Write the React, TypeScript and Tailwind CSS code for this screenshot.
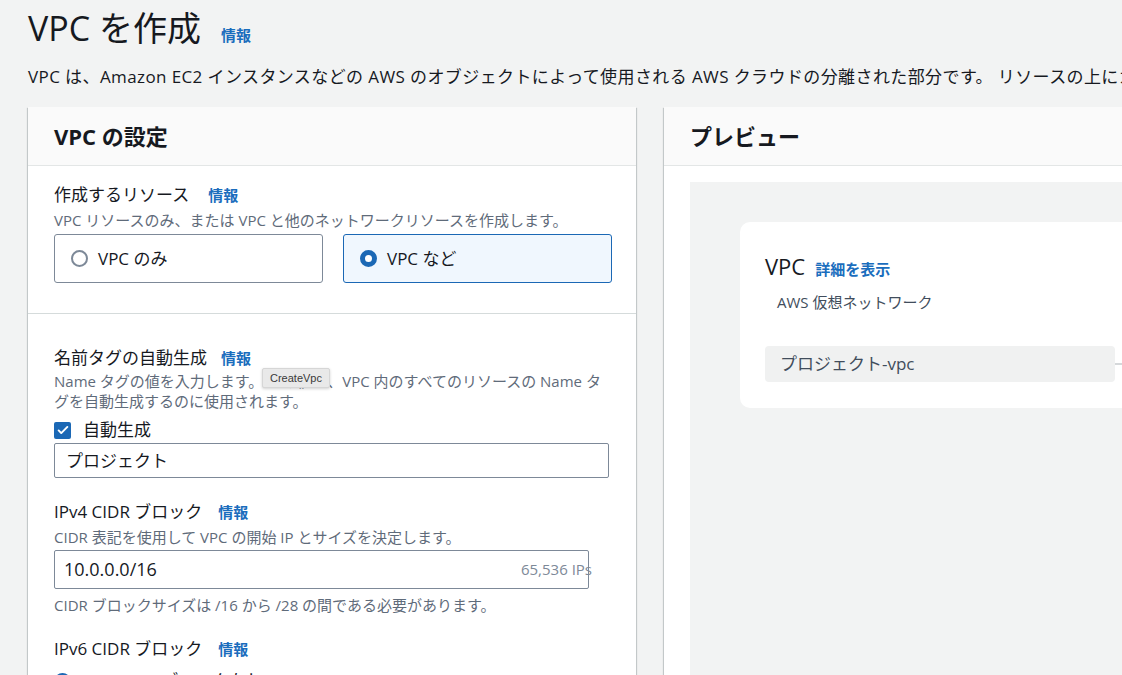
import React from 'react'

const font = "font-['Open_Sans','Noto_Sans_CJK_JP',sans-serif]"

function InfoLink({ className = '' }: { className?: string }) {
  return (
    <a className={`text-[15px] font-bold text-[#1a6dbd] ${className}`}>情報</a>
  )
}

function Radio({ checked }: { checked?: boolean }) {
  return checked ? (
    <span className="w-[17px] h-[17px] rounded-full border-[5px] border-[#1b68b5] bg-white shrink-0" />
  ) : (
    <span className="w-[17px] h-[17px] rounded-full border-2 border-[#7d8998] bg-white shrink-0" />
  )
}

function Tile({ label, checked }: { label: string; checked?: boolean }) {
  return (
    <div
      className={
        checked
          ? 'flex-1 h-[49px] flex items-center gap-[10px] px-[16px] rounded-[3px] border border-[#1b68b5] bg-[#f0f7fe]'
          : 'flex-1 h-[49px] flex items-center gap-[10px] px-[16px] rounded-[3px] border border-[#7d8998] bg-white'
      }
    >
      <Radio checked={checked} />
      <span className="text-[17px] leading-[22px] text-[#16191f]">{label}</span>
    </div>
  )
}

function PanelHeader({ title }: { title: string }) {
  return (
    <div className="h-[59px] shrink-0 bg-[#fafafa] border-b border-[#e3e6e6] px-[26px] flex items-center">
      <h2 className="text-[22px] font-bold text-[#16191f]">{title}</h2>
    </div>
  )
}

const panel =
  'w-[608px] shrink-0 bg-white flex flex-col shadow-[0_1px_1px_0_rgba(0,28,36,0.3),1px_1px_1px_0_rgba(0,28,36,0.15),-1px_1px_1px_0_rgba(0,28,36,0.15)]'

export default function App() {
  return (
    <div className={`${font} w-[1122px] h-[675px] overflow-hidden bg-[#f2f3f3] pl-[28px] pt-[8px] text-[#16191f]`}>
      <div className="flex items-baseline whitespace-nowrap">
        <h1 className="text-[34px] leading-[40px] font-normal">VPC を作成</h1>
        <InfoLink className="ml-[20px]" />
      </div>
      <p className="mt-[17px] text-[17px] leading-[24px] tracking-[0.4px] whitespace-nowrap">
        VPC は、Amazon EC2 インスタンスなどの AWS のオブジェクトによって使用される AWS クラウドの分離された部分です。 リソースの上にカーソルを置くと、詳細が表示されます。
      </p>

      <div className="mt-[18px] flex gap-[28px] h-[700px]">
        {/* settings */}
        <div className={panel}>
          <PanelHeader title="VPC の設定" />
          <div className="px-[26px] pt-[18px] pb-[30px] border-b border-[#d5dbdb]">
            <div className="flex items-center text-[17px] leading-[22px]">
              作成するリソース
              <InfoLink className="ml-[19px]" />
            </div>
            <p className="text-[15px] leading-[20px] text-[#5f6b7a] mt-[4px]">
              VPC リソースのみ、または VPC と他のネットワークリソースを作成します。
            </p>
            <div className="flex gap-[20px] mt-[4px] mr-[-2px]">
              <Tile label="VPC のみ" />
              <Tile label="VPC など" checked />
            </div>
          </div>

          <div className="px-[26px] pt-[33px]">
            <div className="flex items-center text-[17px] leading-[22px]">
              名前タグの自動生成
              <InfoLink className="ml-[14px]" />
            </div>
            <div className="relative mt-[2px] text-[15px] leading-[20px] text-[#5f6b7a] whitespace-nowrap">
              <p>Name タグの値を入力します。 この値は、VPC 内のすべてのリソースの Name タ</p>
              <p>グを自動生成するのに使用されます。</p>
              <span className="absolute left-[208px] top-[-3px] h-[20px] px-[7px] flex items-center bg-[#e9e9e9] border border-[#d6d6d6] rounded-[2px] shadow-[0_1px_3px_rgba(0,0,0,0.18)] text-[11px] text-[#3a3a3a] font-['Liberation_Sans',sans-serif]">
                CreateVpc
              </span>
            </div>
            <label className="mt-[8px] flex items-center gap-[12px] h-[22px]">
              <span className="w-[17px] h-[17px] rounded-[2px] bg-[#1b68b5] flex items-center justify-center">
                <svg viewBox="0 0 16 16" className="w-[14px] h-[14px]">
                  <path d="M3 8.5l3 3 7-7" fill="none" stroke="white" strokeWidth="2.2" strokeLinecap="round" strokeLinejoin="round" />
                </svg>
              </span>
              <span className="text-[17px] leading-[22px]">自動生成</span>
            </label>
            <div className="mt-[2px] h-[35px] w-[555px] border border-[#7d8998] rounded-[2px] flex items-center px-[11px] text-[17px]">
              プロジェクト
            </div>

            <div className="mt-[23px] flex items-center text-[17px] leading-[22px]">
              IPv4 CIDR ブロック
              <InfoLink className="ml-[16px]" />
            </div>
            <p className="mt-[4px] text-[15px] leading-[20px] text-[#5f6b7a]">
              CIDR 表記を使用して VPC の開始 IP とサイズを決定します。
            </p>
            <div className="relative mt-[3px] h-[39px] w-[535px] border border-[#7d8998] rounded-[2px] flex items-center px-[9px] text-[18px]">
              10.0.0.0/16
              <span className="absolute right-[-4px] text-[15px] text-[#7d8998]">65,536 IPs</span>
            </div>
            <p className="mt-[6px] text-[15px] leading-[20px] text-[#5f6b7a]">
              CIDR ブロックサイズは /16 から /28 の間である必要があります。
            </p>

            <div className="mt-[23px] flex items-center text-[17px] leading-[22px]">
              IPv6 CIDR ブロック
              <InfoLink className="ml-[16px]" />
            </div>
            <div className="mt-[10px] flex items-center gap-[10px] h-[22px]">
              <Radio checked />
              <span className="text-[17px]">IPv6 CIDR ブロックなし</span>
            </div>
          </div>
        </div>

        {/* preview */}
        <div className={panel}>
          <PanelHeader title="プレビュー" />
          <div className="flex-1 flex flex-col pl-[26px] pt-[16px]">
            <div className="flex-1 bg-[#f2f3f3] pl-[50px] pt-[40px]">
              <div className="w-[700px] bg-white rounded-[10px] pl-[25px] pt-[30px] pb-[26px]">
                <div className="flex items-baseline gap-[10px]">
                  <span className="text-[22px] leading-[28px]">VPC</span>
                  <a className="text-[15px] font-bold text-[#1a6dbd]">詳細を表示</a>
                </div>
                <p className="mt-[11px] pl-[12px] text-[15px] leading-[20px] text-[#414d5c]">AWS 仮想ネットワーク</p>
                <div className="mt-[34px] flex items-center">
                  <div className="w-[350px] h-[36px] rounded-[4px] bg-[#f0f1f1] flex items-center pl-[15px] text-[17px] text-[#414d5c]">
                    プロジェクト-vpc
                  </div>
                  <div className="w-[60px] h-[2px] bg-[#d5d8da]" />
                </div>
              </div>
            </div>
          </div>
        </div>
      </div>
    </div>
  )
}
